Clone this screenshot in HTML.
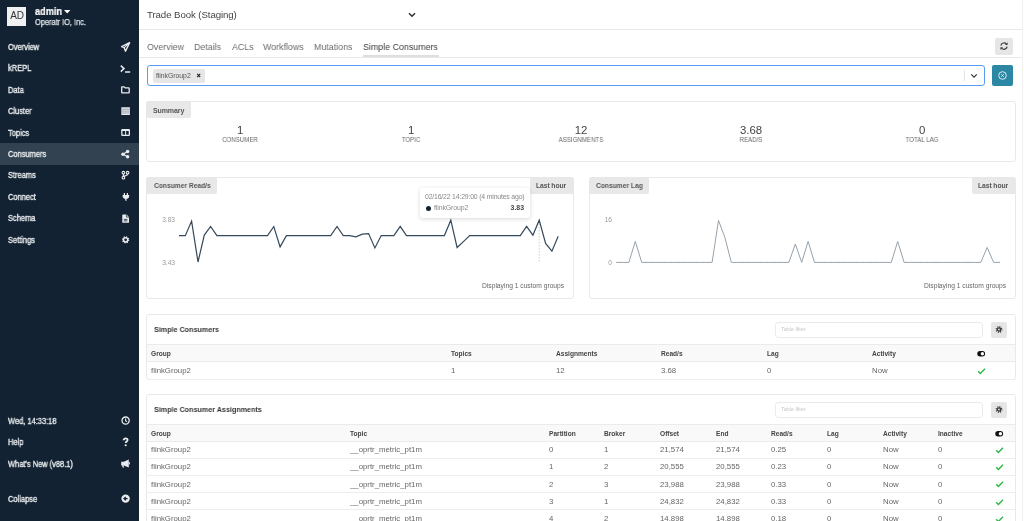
<!DOCTYPE html>
<html><head><meta charset="utf-8">
<style>
*{box-sizing:border-box;margin:0;padding:0}
html,body{width:1024px;height:521px;overflow:hidden;background:#fff;font-family:"Liberation Sans",sans-serif;color:#333;position:relative}
.r{position:absolute}
.t{position:absolute;white-space:nowrap;line-height:1em;will-change:transform}
svg.r{overflow:visible}
</style></head><body>
<div class="r" style="left:0px;top:0px;width:139px;height:521px;background:#122232"></div>
<div class="r" style="left:7px;top:7px;width:19px;height:19px;background:#eef0f2"></div>
<div class="t" style="left:-133.50px;width:300px;text-align:center;top:11.14px;font-size:10px;font-weight:normal;color:#333;letter-spacing:-0.2px;">AD</div>
<div class="t" style="left:34.80px;top:7.13px;font-size:10px;font-weight:bold;color:#fff;letter-spacing:0px;transform:scaleX(0.92);transform-origin:0 0;-webkit-text-stroke:.2px #fff">admin</div>
<svg class="r" style="left:63px;top:9px" width="8" height="5" viewBox="0 0 8 5"><path d="M1 1h6.4L4.2 4.4z" fill="#fff"/></svg>
<div class="t" style="left:34.50px;top:17.92px;font-size:8.6px;font-weight:normal;color:#e3e7eb;letter-spacing:0px;transform:scaleX(0.86);transform-origin:0 0;-webkit-text-stroke:.25px #e3e7eb">Operatr IO, Inc.</div>
<div class="t" style="left:7.50px;top:42.77px;font-size:8.3px;font-weight:normal;color:#e9ecef;letter-spacing:0px;transform:scaleX(0.9);transform-origin:0 0;-webkit-text-stroke:.35px #e9ecef">Overview</div>
<svg class="r" style="left:120px;top:42px" width="10" height="10" viewBox="0 0 10 10"><path d="M9.6 .6L1.6 4.6l2.6 1.1 1.3 3.5z" fill="none" stroke="#e9ecef" stroke-width="1.4" stroke-linejoin="round"/><path d="M4.2 5.7L9.6.6" stroke="#e9ecef" stroke-width="1.1"/></svg>
<div class="t" style="left:7.50px;top:64.21px;font-size:8.3px;font-weight:normal;color:#e9ecef;letter-spacing:0px;transform:scaleX(0.9);transform-origin:0 0;-webkit-text-stroke:.35px #e9ecef">kREPL</div>
<svg class="r" style="left:120px;top:64px" width="10" height="10" viewBox="0 0 10 10"><path d="M.8 1.6l3.2 3L.8 7.6" fill="none" stroke="#e9ecef" stroke-width="1.5"/><path d="M5 8h5.2" stroke="#e9ecef" stroke-width="1.5"/></svg>
<div class="t" style="left:7.50px;top:85.65px;font-size:8.3px;font-weight:normal;color:#e9ecef;letter-spacing:0px;transform:scaleX(0.9);transform-origin:0 0;-webkit-text-stroke:.35px #e9ecef">Data</div>
<svg class="r" style="left:120px;top:85px" width="10" height="10" viewBox="0 0 10 10"><path d="M1.7 1.9h2.5l.9 1h3.5a.6.6 0 0 1 .6.6v3.8a.6.6 0 0 1-.6.6H2.3a.6.6 0 0 1-.6-.6z" fill="none" stroke="#e9ecef" stroke-width="1.3" stroke-linejoin="round"/></svg>
<div class="t" style="left:7.50px;top:107.09px;font-size:8.3px;font-weight:normal;color:#e9ecef;letter-spacing:0px;transform:scaleX(0.9);transform-origin:0 0;-webkit-text-stroke:.35px #e9ecef">Cluster</div>
<svg class="r" style="left:120px;top:107px" width="10" height="10" viewBox="0 0 10 10"><rect x="1.2" y="0.3" width="8.8" height="7.6" rx=".6" fill="#e9ecef"/><path d="M1 2.2h9.2M1 4.1h9.2M1 6h9.2" stroke="#122232" stroke-width=".6" opacity=".6"/></svg>
<div class="t" style="left:7.50px;top:128.53px;font-size:8.3px;font-weight:normal;color:#e9ecef;letter-spacing:0px;transform:scaleX(0.9);transform-origin:0 0;-webkit-text-stroke:.35px #e9ecef">Topics</div>
<svg class="r" style="left:120px;top:128px" width="10" height="10" viewBox="0 0 10 10"><rect x="1.2" y="1" width="8.8" height="7" rx="1.2" fill="#e9ecef"/><rect x="2.5" y="3" width="2.6" height="3.7" fill="#122232"/><rect x="6.1" y="3" width="2.6" height="3.7" fill="#122232"/></svg>
<div class="r" style="left:0px;top:143px;width:139px;height:22px;background:#324250"></div>
<div class="t" style="left:7.50px;top:149.97px;font-size:8.3px;font-weight:normal;color:#e9ecef;letter-spacing:0px;transform:scaleX(0.9);transform-origin:0 0;-webkit-text-stroke:.35px #e9ecef">Consumers</div>
<svg class="r" style="left:120px;top:149px" width="10" height="10" viewBox="0 0 10 10"><circle cx="7.6" cy="2.6" r="1.75" fill="#e9ecef"/><circle cx="3" cy="5.2" r="1.75" fill="#e9ecef"/><circle cx="7.6" cy="7.8" r="1.75" fill="#e9ecef"/><path d="M7.6 2.6L3 5.2l4.6 2.6" fill="none" stroke="#e9ecef" stroke-width="1.2"/></svg>
<div class="t" style="left:7.50px;top:171.41px;font-size:8.3px;font-weight:normal;color:#e9ecef;letter-spacing:0px;transform:scaleX(0.9);transform-origin:0 0;-webkit-text-stroke:.35px #e9ecef">Streams</div>
<svg class="r" style="left:120px;top:171px" width="10" height="10" viewBox="0 0 10 10"><circle cx="3.4" cy="1.7" r="1.3" fill="none" stroke="#e9ecef" stroke-width="1.1"/><circle cx="3.4" cy="6.7" r="1.3" fill="none" stroke="#e9ecef" stroke-width="1.1"/><circle cx="7.6" cy="1.7" r="1.3" fill="none" stroke="#e9ecef" stroke-width="1.1"/><path d="M3.4 3v2.4M7.6 3c0 2.2-3.2 1.6-4.2 2.6" fill="none" stroke="#e9ecef" stroke-width="1.2"/></svg>
<div class="t" style="left:7.50px;top:192.85px;font-size:8.3px;font-weight:normal;color:#e9ecef;letter-spacing:0px;transform:scaleX(0.9);transform-origin:0 0;-webkit-text-stroke:.35px #e9ecef">Connect</div>
<svg class="r" style="left:120px;top:192px" width="10" height="10" viewBox="0 0 10 10"><path d="M4.4 .9v2M7.4 .9v2" stroke="#e9ecef" stroke-width="1.2"/><path d="M2.6 2.9h6.6v1.2c0 1.9-1.4 3-3.3 3s-3.3-1.1-3.3-3z" fill="#e9ecef"/><path d="M5.9 6.5v2.2" stroke="#e9ecef" stroke-width="1.3"/></svg>
<div class="t" style="left:7.50px;top:214.29px;font-size:8.3px;font-weight:normal;color:#e9ecef;letter-spacing:0px;transform:scaleX(0.9);transform-origin:0 0;-webkit-text-stroke:.35px #e9ecef">Schema</div>
<svg class="r" style="left:120px;top:214px" width="10" height="10" viewBox="0 0 10 10"><path d="M2.8 .5h3.8l2.4 2.4v5.3a.5.5 0 0 1-.5.5H2.8a.5.5 0 0 1-.5-.5V1a.5.5 0 0 1 .5-.5z" fill="#e9ecef"/><path d="M3.8 5.4h3.6M3.8 6.9h3.6" stroke="#122232" stroke-width=".8"/><path d="M6.4 .5v2.6H9" fill="none" stroke="#122232" stroke-width=".7"/></svg>
<div class="t" style="left:7.50px;top:235.73px;font-size:8.3px;font-weight:normal;color:#e9ecef;letter-spacing:0px;transform:scaleX(0.9);transform-origin:0 0;-webkit-text-stroke:.35px #e9ecef">Settings</div>
<svg class="r" style="left:120px;top:235px" width="10" height="10" viewBox="0 0 10 10"><circle cx="5.6" cy="4.8" r="2.9" fill="none" stroke="#e9ecef" stroke-width="1.5" stroke-dasharray="1.14 1.14"/><circle cx="5.6" cy="4.8" r="2.1" fill="none" stroke="#e9ecef" stroke-width="1.5"/></svg>
<div class="t" style="left:7.50px;top:416.77px;font-size:8.3px;font-weight:normal;color:#e9ecef;letter-spacing:0px;transform:scaleX(0.9);transform-origin:0 0;-webkit-text-stroke:.35px #e9ecef">Wed, 14:33:18</div>
<svg class="r" style="left:120px;top:416px" width="10" height="10" viewBox="0 0 10 10"><circle cx="5.6" cy="4.6" r="3.6" fill="none" stroke="#e9ecef" stroke-width="1.3"/><path d="M5.6 2.6v2.1l1.3 1" fill="none" stroke="#e9ecef" stroke-width="1.1"/></svg>
<div class="t" style="left:7.50px;top:437.87px;font-size:8.3px;font-weight:normal;color:#e9ecef;letter-spacing:0px;transform:scaleX(0.9);transform-origin:0 0;-webkit-text-stroke:.35px #e9ecef">Help</div>
<svg class="r" style="left:120px;top:437px" width="10" height="10" viewBox="0 0 10 10"><path d="M3.6 3.2c0-1.2.9-1.9 2-1.9s2 .7 2 1.8c0 1.4-1.9 1.4-1.9 2.9" fill="none" stroke="#e9ecef" stroke-width="1.8"/><circle cx="5.7" cy="8.2" r="1.05" fill="#e9ecef"/></svg>
<div class="t" style="left:7.50px;top:459.57px;font-size:8.3px;font-weight:normal;color:#e9ecef;letter-spacing:0px;transform:scaleX(0.9);transform-origin:0 0;-webkit-text-stroke:.35px #e9ecef">What's New (v88.1)</div>
<svg class="r" style="left:120px;top:459px" width="10" height="10" viewBox="0 0 10 10"><path d="M1.2 2.8h2.6L8.8 .6v8L3.8 6.4H1.2z" fill="#e9ecef"/><path d="M2.6 6.2l.9 2.4" stroke="#e9ecef" stroke-width="1.4"/><path d="M9.4 3.2v2.2" stroke="#e9ecef" stroke-width="1"/></svg>
<div class="t" style="left:7.50px;top:494.97px;font-size:8.3px;font-weight:normal;color:#e9ecef;letter-spacing:0px;transform:scaleX(0.9);transform-origin:0 0;-webkit-text-stroke:.35px #e9ecef">Collapse</div>
<svg class="r" style="left:120px;top:494px" width="10" height="10" viewBox="0 0 10 10"><circle cx="5.6" cy="4.6" r="4.2" fill="#e9ecef"/><path d="M7.6 4.6H4.2M5.8 2.9L4 4.6l1.8 1.7" fill="none" stroke="#122232" stroke-width="1.3"/></svg>
<div class="t" style="left:147.30px;top:10.29px;font-size:9.7px;font-weight:normal;color:#444;letter-spacing:-0.1px;">Trade Book (Staging)</div>
<svg class="r" style="left:408px;top:12px" width="8" height="6" viewBox="0 0 8 6"><path d="M1 1.2l3 3 3-3" fill="none" stroke="#333" stroke-width="1.6"/></svg>
<div class="r" style="left:139px;top:29px;width:883px;height:1px;background:#e8e8e8"></div>
<div class="r" style="left:1022px;top:0px;width:2px;height:521px;background:#fff;border-left:1px solid #f0f0f0"></div>
<div class="t" style="left:146.90px;top:41.80px;font-size:9.8px;font-weight:normal;color:#6a6a6a;letter-spacing:0px;transform:scaleX(0.905);transform-origin:0 0;">Overview</div>
<div class="t" style="left:194.10px;top:41.80px;font-size:9.8px;font-weight:normal;color:#6a6a6a;letter-spacing:0px;transform:scaleX(0.905);transform-origin:0 0;">Details</div>
<div class="t" style="left:231.60px;top:41.80px;font-size:9.8px;font-weight:normal;color:#6a6a6a;letter-spacing:0px;transform:scaleX(0.905);transform-origin:0 0;">ACLs</div>
<div class="t" style="left:262.60px;top:41.80px;font-size:9.8px;font-weight:normal;color:#6a6a6a;letter-spacing:0px;transform:scaleX(0.905);transform-origin:0 0;">Workflows</div>
<div class="t" style="left:314.00px;top:41.80px;font-size:9.8px;font-weight:normal;color:#6a6a6a;letter-spacing:0px;transform:scaleX(0.905);transform-origin:0 0;">Mutations</div>
<div class="t" style="left:363.35px;top:41.80px;font-size:9.8px;font-weight:normal;color:#3a3a3a;letter-spacing:0px;transform:scaleX(0.905);transform-origin:0 0;">Simple Consumers</div>
<div class="r" style="left:363px;top:55px;width:76px;height:2px;background:#dedede"></div>
<div class="r" style="left:139px;top:57px;width:883px;height:1px;background:#e8e8e8"></div>
<div class="r" style="left:995px;top:38px;width:18px;height:16.5px;background:#e6e6e6;border-radius:2px"></div>
<svg class="r" style="left:995px;top:38px" width="18" height="16" viewBox="0 0 18 16"><path d="M5.9 7.6A3.2 3.2 0 0 1 11.5 6M12.1 8.6A3.2 3.2 0 0 1 6.5 10.2" fill="none" stroke="#444" stroke-width="1.25"/><path d="M12.6 4.3v2.7H9.9z M5.4 12v-2.7h2.7z" fill="#444"/></svg>
<div class="r" style="left:147px;top:65px;width:838px;height:21px;border:1.2px solid #5a9cf2;border-radius:3px;background:#fff"></div>
<div class="r" style="left:153px;top:69px;width:52px;height:13.5px;background:#e6e6e6;border-radius:2px"></div>
<div class="t" style="left:156.30px;top:73.16px;font-size:6.9px;font-weight:normal;color:#555;letter-spacing:-0.05px;">flinkGroup2</div>
<svg class="r" style="left:195px;top:72px" width="7" height="7" viewBox="0 0 7 7"><path d="M2.2 1.9l3 3.2M5.2 1.9l-3 3.2" stroke="#222" stroke-width="1.1"/></svg>
<div class="r" style="left:964px;top:70px;width:1px;height:11px;background:#e3e3e3"></div>
<svg class="r" style="left:970px;top:73px" width="8" height="6" viewBox="0 0 8 6"><path d="M1.2 1.3l2.8 2.8 2.8-2.8" fill="none" stroke="#333" stroke-width="1.15"/></svg>
<div class="r" style="left:992px;top:65px;width:21px;height:21px;background:#2b87a3;border-radius:2px"></div>
<svg class="r" style="left:992px;top:65px" width="21" height="21" viewBox="0 0 21 21"><circle cx="10.5" cy="10.5" r="3.8" fill="none" stroke="#eef6f9" stroke-width=".9"/><path d="M9.3 9.3l2.4 2.4M11.7 9.3l-2.4 2.4" stroke="#eef6f9" stroke-width=".9"/></svg>
<div class="r" style="left:146px;top:101px;width:870px;height:61px;border:1px solid #e9e9e9;border-radius:3px;background:#fff"></div>
<div class="r" style="left:146px;top:101px;width:45px;height:16.5px;background:#e8e8e8;border-radius:3px 0 2px 0"></div>
<div class="t" style="left:153.40px;top:106.67px;font-size:7px;font-weight:bold;color:#555;letter-spacing:-0.1px;">Summary</div>
<div class="t" style="left:90.20px;width:300px;text-align:center;top:125.35px;font-size:11.4px;font-weight:normal;color:#444;letter-spacing:-0.1px;">1</div>
<div class="t" style="left:90.20px;width:300px;text-align:center;top:136.84px;font-size:6.8px;font-weight:normal;color:#666;letter-spacing:0px;transform:scaleX(0.9);transform-origin:50% 0">CONSUMER</div>
<div class="t" style="left:260.60px;width:300px;text-align:center;top:125.35px;font-size:11.4px;font-weight:normal;color:#444;letter-spacing:-0.1px;">1</div>
<div class="t" style="left:260.60px;width:300px;text-align:center;top:136.84px;font-size:6.8px;font-weight:normal;color:#666;letter-spacing:0px;transform:scaleX(0.9);transform-origin:50% 0">TOPIC</div>
<div class="t" style="left:431.00px;width:300px;text-align:center;top:125.35px;font-size:11.4px;font-weight:normal;color:#444;letter-spacing:-0.1px;">12</div>
<div class="t" style="left:431.00px;width:300px;text-align:center;top:136.84px;font-size:6.8px;font-weight:normal;color:#666;letter-spacing:0px;transform:scaleX(0.9);transform-origin:50% 0">ASSIGNMENTS</div>
<div class="t" style="left:601.40px;width:300px;text-align:center;top:125.35px;font-size:11.4px;font-weight:normal;color:#444;letter-spacing:-0.1px;">3.68</div>
<div class="t" style="left:601.40px;width:300px;text-align:center;top:136.84px;font-size:6.8px;font-weight:normal;color:#666;letter-spacing:0px;transform:scaleX(0.9);transform-origin:50% 0">READ/S</div>
<div class="t" style="left:771.80px;width:300px;text-align:center;top:125.35px;font-size:11.4px;font-weight:normal;color:#444;letter-spacing:-0.1px;">0</div>
<div class="t" style="left:771.80px;width:300px;text-align:center;top:136.84px;font-size:6.8px;font-weight:normal;color:#666;letter-spacing:0px;transform:scaleX(0.9);transform-origin:50% 0">TOTAL LAG</div>
<div class="r" style="left:146px;top:177px;width:428px;height:122px;border:1px solid #e9e9e9;border-radius:3px;background:#fff"></div>
<div class="r" style="left:589px;top:177px;width:427px;height:122px;border:1px solid #e9e9e9;border-radius:3px;background:#fff"></div>
<div class="r" style="left:146px;top:177px;width:71px;height:16.5px;background:#e8e8e8;border-radius:3px 0 2px 0"></div>
<div class="t" style="left:153.80px;top:182.11px;font-size:7.2px;font-weight:bold;color:#555;letter-spacing:0px;transform:scaleX(0.93);transform-origin:0 0;">Consumer Read/s</div>
<div class="r" style="left:530px;top:177px;width:44px;height:16.5px;background:#e8e8e8;border-radius:0 3px 0 2px"></div>
<div class="t" style="left:535.60px;top:182.84px;font-size:6.8px;font-weight:bold;color:#555;letter-spacing:-0.1px;">Last hour</div>
<div class="r" style="left:589px;top:177px;width:59.5px;height:16.5px;background:#e8e8e8;border-radius:3px 0 2px 0"></div>
<div class="t" style="left:595.80px;top:182.11px;font-size:7.2px;font-weight:bold;color:#555;letter-spacing:0px;transform:scaleX(0.93);transform-origin:0 0;">Consumer Lag</div>
<div class="r" style="left:972px;top:177px;width:44px;height:16.5px;background:#e8e8e8;border-radius:0 3px 0 2px"></div>
<div class="t" style="left:977.60px;top:182.84px;font-size:6.8px;font-weight:bold;color:#555;letter-spacing:-0.1px;">Last hour</div>
<div class="t" style="left:482.00px;top:283.33px;font-size:6.7px;font-weight:normal;color:#666;letter-spacing:0px;">Displaying 1 custom groups</div>
<div class="t" style="left:924.00px;top:283.33px;font-size:6.7px;font-weight:normal;color:#666;letter-spacing:0px;">Displaying 1 custom groups</div>
<div class="t" style="left:-125.00px;width:300px;text-align:right;top:217.21px;font-size:6.6px;font-weight:normal;color:#9a9a9a;letter-spacing:0px;">3.83</div>
<div class="t" style="left:-125.00px;width:300px;text-align:right;top:260.21px;font-size:6.6px;font-weight:normal;color:#9a9a9a;letter-spacing:0px;">3.43</div>
<div class="t" style="left:312.00px;width:300px;text-align:right;top:217.41px;font-size:6.6px;font-weight:normal;color:#9a9a9a;letter-spacing:0px;">16</div>
<div class="t" style="left:312.00px;width:300px;text-align:right;top:259.91px;font-size:6.6px;font-weight:normal;color:#9a9a9a;letter-spacing:0px;">0</div>
<svg class="r" style="left:0px;top:0px" width="1024" height="521" viewBox="0 0 1024 521"><path d="M539.2 221V262" stroke="#cfcfcf" stroke-width="1" stroke-dasharray="1.5,1.5"/><polyline transform="translate(0,.3)" points="179.0,235.4 185.3,235.4 191.6,220.8 198.0,261.7 204.3,234.8 210.6,226.2 216.9,235.4 223.2,235.4 229.6,235.4 235.9,235.4 242.2,235.4 248.5,235.4 254.8,235.4 261.2,235.4 267.5,235.4 273.8,226.2 280.1,246.6 286.4,235.4 292.8,235.4 299.1,235.4 305.4,235.4 311.7,235.4 318.0,235.4 324.4,235.4 330.7,235.4 337.0,226.2 343.3,235.4 349.6,235.4 356.0,236.5 362.3,233.9 368.6,233.3 374.9,247.6 381.2,235.3 387.6,235.3 393.9,235.3 400.2,226.0 406.5,235.3 412.8,235.3 419.2,235.3 425.5,235.3 431.8,235.3 438.1,235.3 444.4,235.3 450.8,219.9 457.1,247.2 463.4,241.3 469.7,235.3 476.0,235.3 482.4,235.3 488.7,235.3 495.0,235.3 501.3,235.3 507.6,235.3 514.0,235.3 520.3,235.3 526.6,226.0 532.9,234.9 539.2,219.9 545.6,243.1 551.9,250.9 558.2,235.9" fill="none" stroke="#34495b" stroke-width="1.2"/><polyline transform="translate(0,.5)" points="616.1,261.9 622.5,261.9 628.9,261.9 635.3,240.9 641.7,261.9 648.1,261.9 654.5,261.9 660.9,261.9 667.3,261.9 673.7,261.9 680.1,261.9 686.5,261.9 692.9,261.9 699.3,261.9 705.7,261.9 712.1,261.9 718.5,219.9 724.9,237.0 731.3,261.9 737.7,261.9 744.1,261.9 750.5,261.9 756.9,261.9 763.3,261.9 769.7,261.9 776.1,261.9 782.5,261.9 788.9,261.9 795.3,243.5 801.7,261.9 808.1,240.9 814.5,261.9 820.9,261.9 827.3,261.9 833.7,261.9 840.1,261.9 846.5,261.9 852.9,261.9 859.3,261.9 865.7,261.9 872.1,261.9 878.5,261.9 884.9,261.9 891.3,261.9 897.7,240.9 904.1,261.9 910.5,261.9 916.9,261.9 923.3,261.9 929.7,261.9 936.0,261.9 942.4,261.9 948.8,261.9 955.2,261.9 961.6,261.9 968.0,261.9 974.4,261.9 980.8,261.9 987.2,246.9 993.6,261.9 1000.0,261.9" fill="none" stroke="#97a2ab" stroke-width="1"/></svg>
<div class="r" style="left:420px;top:188px;width:110px;height:30px;background:#fff;border-radius:3px;box-shadow:0 1px 4px rgba(0,0,0,.16)"></div>
<div class="t" style="left:425.40px;top:194.06px;font-size:6.9px;font-weight:normal;color:#888;letter-spacing:-0.18px;">02/16/22 14:29:00 (4 minutes ago)</div>
<div class="r" style="left:425.5px;top:205.7px;width:5px;height:5px;border-radius:50%;background:#13212f"></div>
<div class="t" style="left:433.80px;top:204.86px;font-size:6.9px;font-weight:normal;color:#888;letter-spacing:-0.1px;">flinkGroup2</div>
<div class="t" style="left:224.20px;width:300px;text-align:right;top:204.86px;font-size:6.9px;font-weight:bold;color:#444;letter-spacing:0px;">3.83</div>
<div class="r" style="left:146px;top:314px;width:870px;height:66px;border:1px solid #e9e9e9;border-radius:3px;background:#fff"></div>
<div class="t" style="left:153.80px;top:326.00px;font-size:7.8px;font-weight:bold;color:#333;letter-spacing:0px;transform:scaleX(0.92);transform-origin:0 0;">Simple Consumers</div>
<div class="r" style="left:775px;top:322px;width:208px;height:15.5px;border:1px solid #ebebeb;border-radius:3px;background:#fff"></div>
<div class="t" style="left:781.30px;top:327.23px;font-size:5.4px;font-weight:normal;color:#c8c8c8;letter-spacing:0px;">Table filter</div>
<div class="r" style="left:991px;top:322px;width:16px;height:15.5px;background:#e6e6e6;border-radius:2px"></div>
<svg class="r" style="left:991px;top:322px" width="16" height="15" viewBox="0 0 16 15"><circle cx="8" cy="7.5" r="2.75" fill="none" stroke="#333" stroke-width="1.3" stroke-dasharray="1.08 1.08"/><circle cx="8" cy="7.5" r="1.55" fill="none" stroke="#333" stroke-width="1.3"/></svg>
<div class="r" style="left:147px;top:344px;width:868px;height:18px;background:#f9f9f9;border-top:1px solid #ebebeb;border-bottom:1px solid #ebebeb"></div>
<div class="t" style="left:150.70px;top:351.01px;font-size:6.6px;font-weight:bold;color:#444;letter-spacing:0px;">Group</div>
<div class="t" style="left:450.70px;top:351.01px;font-size:6.6px;font-weight:bold;color:#444;letter-spacing:0px;">Topics</div>
<div class="t" style="left:555.70px;top:351.01px;font-size:6.6px;font-weight:bold;color:#444;letter-spacing:0px;">Assignments</div>
<div class="t" style="left:660.70px;top:351.01px;font-size:6.6px;font-weight:bold;color:#444;letter-spacing:0px;">Read/s</div>
<div class="t" style="left:766.70px;top:351.01px;font-size:6.6px;font-weight:bold;color:#444;letter-spacing:0px;">Lag</div>
<div class="t" style="left:871.70px;top:351.01px;font-size:6.6px;font-weight:bold;color:#444;letter-spacing:0px;">Activity</div>
<svg class="r" style="left:977px;top:350px" width="9" height="8" viewBox="0 0 9 8"><rect x=".3" y="1.1" width="7.8" height="5.4" rx="2.7" fill="#111"/><circle cx="5.4" cy="3.8" r="1.7" fill="#fff"/></svg>
<div class="r" style="left:147px;top:362px;width:868px;height:18px;border-bottom:1px solid #ededed"></div>
<div class="t" style="left:150.70px;top:366.60px;font-size:7.8px;font-weight:normal;color:#666;letter-spacing:0px;">flinkGroup2</div>
<div class="t" style="left:450.70px;top:366.60px;font-size:7.8px;font-weight:normal;color:#666;letter-spacing:0px;">1</div>
<div class="t" style="left:555.70px;top:366.60px;font-size:7.8px;font-weight:normal;color:#666;letter-spacing:0px;">12</div>
<div class="t" style="left:660.70px;top:366.60px;font-size:7.8px;font-weight:normal;color:#666;letter-spacing:0px;">3.68</div>
<div class="t" style="left:766.70px;top:366.60px;font-size:7.8px;font-weight:normal;color:#666;letter-spacing:0px;">0</div>
<div class="t" style="left:871.70px;top:366.60px;font-size:7.8px;font-weight:normal;color:#666;letter-spacing:0px;">Now</div>
<svg class="r" style="left:977px;top:367.5px" width="9" height="7" viewBox="0 0 9 7"><path d="M1.2 3.2l2.2 2.2L8 .8" fill="none" stroke="#2fb548" stroke-width="1.4"/></svg>
<div class="r" style="left:146px;top:394px;width:870px;height:166px;border:1px solid #e9e9e9;border-radius:3px;background:#fff"></div>
<div class="t" style="left:153.80px;top:406.00px;font-size:7.8px;font-weight:bold;color:#333;letter-spacing:0px;transform:scaleX(0.92);transform-origin:0 0;">Simple Consumer Assignments</div>
<div class="r" style="left:775px;top:402px;width:208px;height:15.5px;border:1px solid #ebebeb;border-radius:3px;background:#fff"></div>
<div class="t" style="left:781.30px;top:407.23px;font-size:5.4px;font-weight:normal;color:#c8c8c8;letter-spacing:0px;">Table filter</div>
<div class="r" style="left:991px;top:402px;width:16px;height:15.5px;background:#e6e6e6;border-radius:2px"></div>
<svg class="r" style="left:991px;top:402px" width="16" height="15" viewBox="0 0 16 15"><circle cx="8" cy="7.5" r="2.75" fill="none" stroke="#333" stroke-width="1.3" stroke-dasharray="1.08 1.08"/><circle cx="8" cy="7.5" r="1.55" fill="none" stroke="#333" stroke-width="1.3"/></svg>
<div class="r" style="left:147px;top:423.5px;width:868px;height:18px;background:#f9f9f9;border-top:1px solid #ebebeb;border-bottom:1px solid #ebebeb"></div>
<div class="t" style="left:150.70px;top:430.51px;font-size:6.6px;font-weight:bold;color:#444;letter-spacing:0px;">Group</div>
<div class="t" style="left:349.70px;top:430.51px;font-size:6.6px;font-weight:bold;color:#444;letter-spacing:0px;">Topic</div>
<div class="t" style="left:548.70px;top:430.51px;font-size:6.6px;font-weight:bold;color:#444;letter-spacing:0px;">Partition</div>
<div class="t" style="left:604.20px;top:430.51px;font-size:6.6px;font-weight:bold;color:#444;letter-spacing:0px;">Broker</div>
<div class="t" style="left:659.70px;top:430.51px;font-size:6.6px;font-weight:bold;color:#444;letter-spacing:0px;">Offset</div>
<div class="t" style="left:715.70px;top:430.51px;font-size:6.6px;font-weight:bold;color:#444;letter-spacing:0px;">End</div>
<div class="t" style="left:771.20px;top:430.51px;font-size:6.6px;font-weight:bold;color:#444;letter-spacing:0px;">Read/s</div>
<div class="t" style="left:827.20px;top:430.51px;font-size:6.6px;font-weight:bold;color:#444;letter-spacing:0px;">Lag</div>
<div class="t" style="left:882.90px;top:430.51px;font-size:6.6px;font-weight:bold;color:#444;letter-spacing:0px;">Activity</div>
<div class="t" style="left:938.30px;top:430.51px;font-size:6.6px;font-weight:bold;color:#444;letter-spacing:0px;">Inactive</div>
<svg class="r" style="left:994.5px;top:429.5px" width="9" height="8" viewBox="0 0 9 8"><rect x=".3" y="1.1" width="7.8" height="5.4" rx="2.7" fill="#111"/><circle cx="5.4" cy="3.8" r="1.7" fill="#fff"/></svg>
<div class="r" style="left:147px;top:441.5px;width:868px;height:17.2px;border-bottom:1px solid #ededed"></div>
<div class="t" style="left:150.70px;top:446.10px;font-size:7.8px;font-weight:normal;color:#666;letter-spacing:0px;">flinkGroup2</div>
<div class="t" style="left:349.70px;top:446.10px;font-size:7.8px;font-weight:normal;color:#666;letter-spacing:0px;">__oprtr_metric_pt1m</div>
<div class="t" style="left:548.70px;top:446.10px;font-size:7.8px;font-weight:normal;color:#666;letter-spacing:0px;">0</div>
<div class="t" style="left:604.20px;top:446.10px;font-size:7.8px;font-weight:normal;color:#666;letter-spacing:0px;">1</div>
<div class="t" style="left:659.70px;top:446.10px;font-size:7.8px;font-weight:normal;color:#666;letter-spacing:0px;">21,574</div>
<div class="t" style="left:715.70px;top:446.10px;font-size:7.8px;font-weight:normal;color:#666;letter-spacing:0px;">21,574</div>
<div class="t" style="left:771.20px;top:446.10px;font-size:7.8px;font-weight:normal;color:#666;letter-spacing:0px;">0.25</div>
<div class="t" style="left:827.20px;top:446.10px;font-size:7.8px;font-weight:normal;color:#666;letter-spacing:0px;">0</div>
<div class="t" style="left:882.90px;top:446.10px;font-size:7.8px;font-weight:normal;color:#666;letter-spacing:0px;">Now</div>
<div class="t" style="left:938.30px;top:446.10px;font-size:7.8px;font-weight:normal;color:#666;letter-spacing:0px;">0</div>
<svg class="r" style="left:994.5px;top:447.0px" width="9" height="7" viewBox="0 0 9 7"><path d="M1.2 3.2l2.2 2.2L8 .8" fill="none" stroke="#2fb548" stroke-width="1.4"/></svg>
<div class="r" style="left:147px;top:458.7px;width:868px;height:17.2px;border-bottom:1px solid #ededed"></div>
<div class="t" style="left:150.70px;top:463.30px;font-size:7.8px;font-weight:normal;color:#666;letter-spacing:0px;">flinkGroup2</div>
<div class="t" style="left:349.70px;top:463.30px;font-size:7.8px;font-weight:normal;color:#666;letter-spacing:0px;">__oprtr_metric_pt1m</div>
<div class="t" style="left:548.70px;top:463.30px;font-size:7.8px;font-weight:normal;color:#666;letter-spacing:0px;">1</div>
<div class="t" style="left:604.20px;top:463.30px;font-size:7.8px;font-weight:normal;color:#666;letter-spacing:0px;">2</div>
<div class="t" style="left:659.70px;top:463.30px;font-size:7.8px;font-weight:normal;color:#666;letter-spacing:0px;">20,555</div>
<div class="t" style="left:715.70px;top:463.30px;font-size:7.8px;font-weight:normal;color:#666;letter-spacing:0px;">20,555</div>
<div class="t" style="left:771.20px;top:463.30px;font-size:7.8px;font-weight:normal;color:#666;letter-spacing:0px;">0.23</div>
<div class="t" style="left:827.20px;top:463.30px;font-size:7.8px;font-weight:normal;color:#666;letter-spacing:0px;">0</div>
<div class="t" style="left:882.90px;top:463.30px;font-size:7.8px;font-weight:normal;color:#666;letter-spacing:0px;">Now</div>
<div class="t" style="left:938.30px;top:463.30px;font-size:7.8px;font-weight:normal;color:#666;letter-spacing:0px;">0</div>
<svg class="r" style="left:994.5px;top:464.2px" width="9" height="7" viewBox="0 0 9 7"><path d="M1.2 3.2l2.2 2.2L8 .8" fill="none" stroke="#2fb548" stroke-width="1.4"/></svg>
<div class="r" style="left:147px;top:475.9px;width:868px;height:17.2px;border-bottom:1px solid #ededed"></div>
<div class="t" style="left:150.70px;top:480.50px;font-size:7.8px;font-weight:normal;color:#666;letter-spacing:0px;">flinkGroup2</div>
<div class="t" style="left:349.70px;top:480.50px;font-size:7.8px;font-weight:normal;color:#666;letter-spacing:0px;">__oprtr_metric_pt1m</div>
<div class="t" style="left:548.70px;top:480.50px;font-size:7.8px;font-weight:normal;color:#666;letter-spacing:0px;">2</div>
<div class="t" style="left:604.20px;top:480.50px;font-size:7.8px;font-weight:normal;color:#666;letter-spacing:0px;">3</div>
<div class="t" style="left:659.70px;top:480.50px;font-size:7.8px;font-weight:normal;color:#666;letter-spacing:0px;">23,988</div>
<div class="t" style="left:715.70px;top:480.50px;font-size:7.8px;font-weight:normal;color:#666;letter-spacing:0px;">23,988</div>
<div class="t" style="left:771.20px;top:480.50px;font-size:7.8px;font-weight:normal;color:#666;letter-spacing:0px;">0.33</div>
<div class="t" style="left:827.20px;top:480.50px;font-size:7.8px;font-weight:normal;color:#666;letter-spacing:0px;">0</div>
<div class="t" style="left:882.90px;top:480.50px;font-size:7.8px;font-weight:normal;color:#666;letter-spacing:0px;">Now</div>
<div class="t" style="left:938.30px;top:480.50px;font-size:7.8px;font-weight:normal;color:#666;letter-spacing:0px;">0</div>
<svg class="r" style="left:994.5px;top:481.4px" width="9" height="7" viewBox="0 0 9 7"><path d="M1.2 3.2l2.2 2.2L8 .8" fill="none" stroke="#2fb548" stroke-width="1.4"/></svg>
<div class="r" style="left:147px;top:493.09999999999997px;width:868px;height:17.2px;border-bottom:1px solid #ededed"></div>
<div class="t" style="left:150.70px;top:497.70px;font-size:7.8px;font-weight:normal;color:#666;letter-spacing:0px;">flinkGroup2</div>
<div class="t" style="left:349.70px;top:497.70px;font-size:7.8px;font-weight:normal;color:#666;letter-spacing:0px;">__oprtr_metric_pt1m</div>
<div class="t" style="left:548.70px;top:497.70px;font-size:7.8px;font-weight:normal;color:#666;letter-spacing:0px;">3</div>
<div class="t" style="left:604.20px;top:497.70px;font-size:7.8px;font-weight:normal;color:#666;letter-spacing:0px;">1</div>
<div class="t" style="left:659.70px;top:497.70px;font-size:7.8px;font-weight:normal;color:#666;letter-spacing:0px;">24,832</div>
<div class="t" style="left:715.70px;top:497.70px;font-size:7.8px;font-weight:normal;color:#666;letter-spacing:0px;">24,832</div>
<div class="t" style="left:771.20px;top:497.70px;font-size:7.8px;font-weight:normal;color:#666;letter-spacing:0px;">0.33</div>
<div class="t" style="left:827.20px;top:497.70px;font-size:7.8px;font-weight:normal;color:#666;letter-spacing:0px;">0</div>
<div class="t" style="left:882.90px;top:497.70px;font-size:7.8px;font-weight:normal;color:#666;letter-spacing:0px;">Now</div>
<div class="t" style="left:938.30px;top:497.70px;font-size:7.8px;font-weight:normal;color:#666;letter-spacing:0px;">0</div>
<svg class="r" style="left:994.5px;top:498.59999999999997px" width="9" height="7" viewBox="0 0 9 7"><path d="M1.2 3.2l2.2 2.2L8 .8" fill="none" stroke="#2fb548" stroke-width="1.4"/></svg>
<div class="r" style="left:147px;top:510.29999999999995px;width:868px;height:17.2px;border-bottom:1px solid #ededed"></div>
<div class="t" style="left:150.70px;top:514.90px;font-size:7.8px;font-weight:normal;color:#666;letter-spacing:0px;">flinkGroup2</div>
<div class="t" style="left:349.70px;top:514.90px;font-size:7.8px;font-weight:normal;color:#666;letter-spacing:0px;">__oprtr_metric_pt1m</div>
<div class="t" style="left:548.70px;top:514.90px;font-size:7.8px;font-weight:normal;color:#666;letter-spacing:0px;">4</div>
<div class="t" style="left:604.20px;top:514.90px;font-size:7.8px;font-weight:normal;color:#666;letter-spacing:0px;">2</div>
<div class="t" style="left:659.70px;top:514.90px;font-size:7.8px;font-weight:normal;color:#666;letter-spacing:0px;">14,898</div>
<div class="t" style="left:715.70px;top:514.90px;font-size:7.8px;font-weight:normal;color:#666;letter-spacing:0px;">14,898</div>
<div class="t" style="left:771.20px;top:514.90px;font-size:7.8px;font-weight:normal;color:#666;letter-spacing:0px;">0.18</div>
<div class="t" style="left:827.20px;top:514.90px;font-size:7.8px;font-weight:normal;color:#666;letter-spacing:0px;">0</div>
<div class="t" style="left:882.90px;top:514.90px;font-size:7.8px;font-weight:normal;color:#666;letter-spacing:0px;">Now</div>
<div class="t" style="left:938.30px;top:514.90px;font-size:7.8px;font-weight:normal;color:#666;letter-spacing:0px;">0</div>
<svg class="r" style="left:994.5px;top:515.8px" width="9" height="7" viewBox="0 0 9 7"><path d="M1.2 3.2l2.2 2.2L8 .8" fill="none" stroke="#2fb548" stroke-width="1.4"/></svg>
</body></html>
